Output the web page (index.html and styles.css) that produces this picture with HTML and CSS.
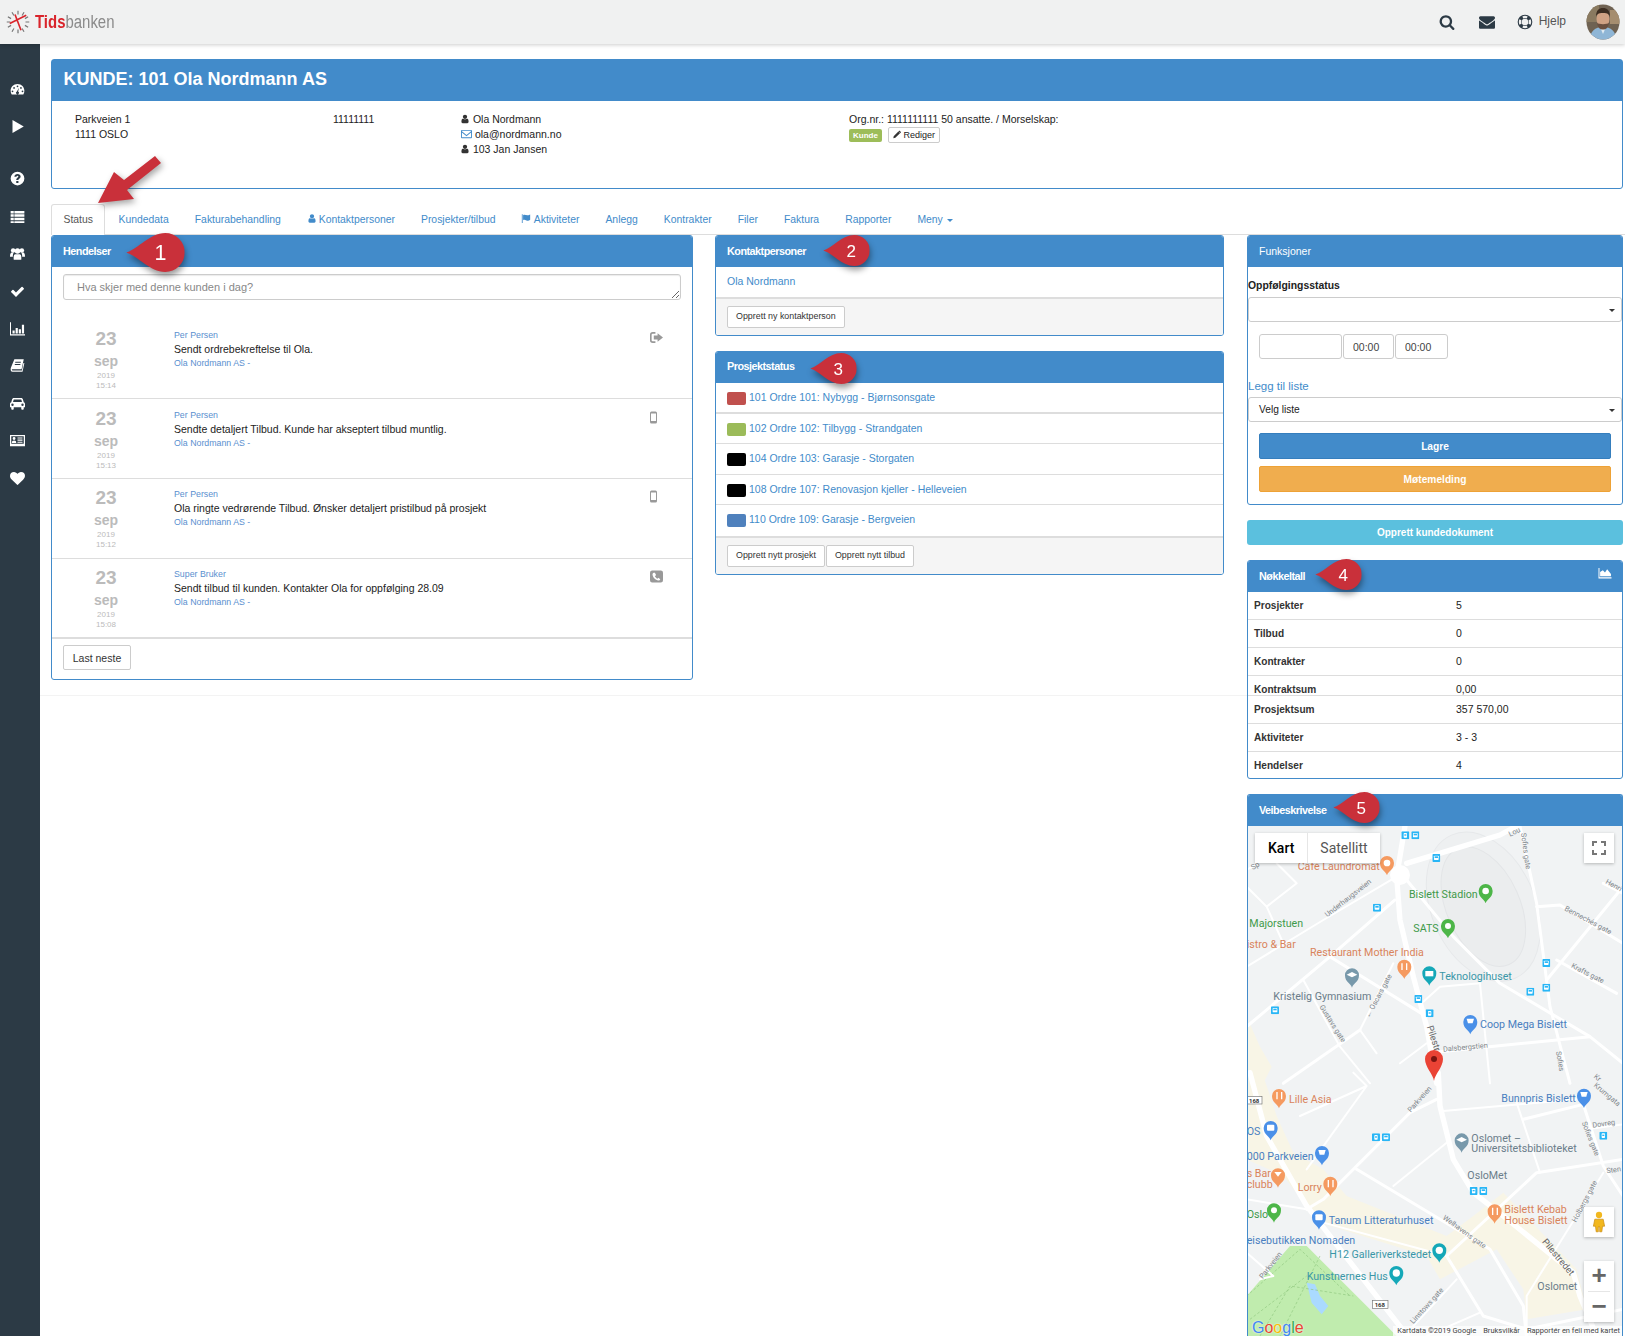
FILE: index.html
```html
<!DOCTYPE html>
<html lang="no">
<head>
<meta charset="utf-8">
<title>Tidsbanken</title>
<link rel="stylesheet" href="styles.css">
</head>
<body>
<svg class="defs" aria-hidden="true">
  <symbol id="i-user" viewBox="0 0 1792 1792"><path d="M1536 1399q0 109-62.500 187t-150.500 78h-854q-88 0-150.500-78t-62.500-187q0-85 8.500-160.500t31.500-152 58.500-131 94-89 134.500-34.500q131 128 313 128t313-128q76 0 134.500 34.500t94 89 58.500 131 31.500 152 8.500 160.500zm-256-887q0 159-112.500 271.500t-271.500 112.500-271.500-112.500-112.500-271.500 112.500-271.500 271.500-112.500 271.500 112.500 112.500 271.500z"/></symbol>
  <symbol id="i-search" viewBox="0 0 1792 1792"><path d="M1216 832q0-185-131.500-316.500t-316.500-131.500-316.500 131.500-131.500 316.500 131.500 316.500 316.500 131.500 316.500-131.500 131.500-316.500zm512 832q0 52-38 90t-90 38q-54 0-90-38l-343-342q-179 124-399 124-143 0-273.500-55.500t-225-150-150-225-55.500-273.500 55.500-273.500 150-225 225-150 273.500-55.500 273.500 55.500 225 150 150 225 55.500 273.500q0 220-124 399l343 343q37 37 37 90z"/></symbol>
  <symbol id="i-mail" viewBox="0 0 1792 1792"><path d="M1792 710v794q0 66-47 113t-113 47h-1472q-66 0-113-47t-47-113v-794q44 49 101 87 362 246 497 345 57 42 92.500 65.500t94.500 48 110 24.500h2q51 0 110-24.500t94.500-48 92.500-65.500q170-123 498-345 57-39 100-87zm0-294q0 79-49 151t-122 123q-376 261-468 325-10 7-42.500 30.500t-54 38-52 32.500-57.500 27-50 9h-2q-23 0-50-9t-57.500-27-52-32.500-54-38-42.500-30.500q-91-64-262-182.500t-205-142.500q-62-42-117-115.500t-55-136.500q0-78 41.500-130t118.500-52h1472q65 0 112.500 47t47.500 113z"/></symbol>
  <symbol id="i-heart" viewBox="0 0 1792 1792"><path d="M896 1664q-26 0-44-18l-624-602q-10-8-27.500-26t-55.500-65.500-68-97.500-53.500-121-23.500-138q0-220 127-344t351-124q62 0 126.500 21.500t120 58 95.500 68.500 76 68q36-36 76-68t95.500-68.500 120-58 126.500-21.500q224 0 351 124t127 344q0 221-229 450l-623 600q-18 18-44 18z"/></symbol>
  <symbol id="i-check" viewBox="0 0 1792 1792"><path d="M1671 566q0 40-28 68l-724 724-136 136q-28 28-68 28t-68-28l-136-136-362-362q-28-28-28-68t28-68l136-136q28-28 68-28t68 28l294 295 656-657q28-28 68-28t68 28l136 136q28 28 28 68z"/></symbol>
  <symbol id="i-gauge" viewBox="0 0 24 24"><path fill-rule="evenodd" d="M12 3C5.400 3 1 8.200 1 14c0 2.400.6 4.400 1.700 6h18.600c1.100-1.600 1.700-3.600 1.700-6 0-5.800-4.400-11-11-11zM12 5.500a1.400 1.400 0 1 1 0 2.800 1.400 1.400 0 0 1 0-2.800zM6.500 8a1.400 1.400 0 1 1 0 2.800 1.400 1.400 0 0 1 0-2.800zM4 13.500a1.400 1.400 0 1 1 0 2.800 1.400 1.400 0 0 1 0-2.800zM20 13.500a1.400 1.400 0 1 1 0 2.800 1.400 1.400 0 0 1 0-2.800zM17.500 8a1.400 1.400 0 1 1 0 2.800 1.400 1.400 0 0 1 0-2.800zM14.500 9l-1.500 6.200a2.400 2.400 0 1 1-2 0z"/></symbol>
  <symbol id="i-play" viewBox="0 0 24 24"><path d="M4 1.500 22 12 4 22.500z"/></symbol>
  <symbol id="i-help" viewBox="0 0 24 24"><path fill-rule="evenodd" d="M12 1a11 11 0 1 0 0 22 11 11 0 0 0 0-22zM10 16h3.500v3.200H10zM7 9c.2-2.800 2.200-4.200 5-4.200 2.900 0 5 1.600 5 4 0 1.800-1 2.700-2.200 3.500-.9.600-1.300 1-1.300 2.200H10c0-2 .6-2.900 1.900-3.800.8-.6 1.500-1 1.500-1.800 0-.7-.6-1.200-1.400-1.200-1 0-1.500.5-1.700 1.600z"/></symbol>
  <symbol id="i-list" viewBox="0 0 24 24"><path d="M1 3h22v4H1zM1 8.500h22v4H1zM1 14h22v4H1zM1 19.500h22v3H1z"/><path class="gap" d="M6 3h1v19H6z"/></symbol>
  <symbol id="i-group" viewBox="0 0 24 24"><circle cx="5" cy="7" r="3.600"/><circle cx="19" cy="7" r="3.600"/><circle cx="12" cy="8" r="4.400"/><path d="M0 17c0-4 1-6.500 3-6.500h3c-1 1.500-1.500 3.500-1.500 6.500H0zM24 17c0-4-1-6.500-3-6.500h-3c1 1.500 1.500 3.500 1.500 6.500H24zM6 22c-.5-5 0-9 2.500-9h7c2.500 0 3 4 2.500 9z"/></symbol>
  <symbol id="i-bars" viewBox="0 0 24 24"><path d="M0 2h1.600v19H24v2H0zM4 15h3.500v5H4zM9 11h3.500v9H9zM14 13h3.500v7H14zM19 6h3.500v14H19z"/></symbol>
  <symbol id="i-book" viewBox="0 0 24 24"><path d="M7 2h15l-3.500 16H3.500C2.600 18 2.800 20 4 20h15l2.500-12H23l-3 14H4c-3 0-3.300-3.500-2.800-6z"/><path class="gap" d="M8.500 6h9l-.3 1.500h-9zM7.800 9.500h9l-.3 1.500h-9z"/></symbol>
  <symbol id="i-car" viewBox="0 0 24 24"><path fill-rule="evenodd" d="M6 3h12c1.300 0 2.200 1 2.600 2.200L22 10c1.300.6 2 1.700 2 3v5h-2v2.500a1.500 1.500 0 0 1-1.500 1.500h-1a1.500 1.500 0 0 1-1.500-1.500V18H6v2.500A1.500 1.500 0 0 1 4.500 22h-1A1.500 1.500 0 0 1 2 20.500V18H0v-5c0-1.300.7-2.400 2-3l1.400-4.800C3.800 4 4.700 3 6 3zM6 5.500 4.800 9.700h14.400L18 5.500zM4 12a1.900 1.900 0 1 0 0 3.800A1.900 1.900 0 0 0 4 12zm16 0a1.900 1.900 0 1 0 0 3.800 1.900 1.900 0 0 0 0-3.800z"/></symbol>
  <symbol id="i-card" viewBox="0 0 24 24"><path fill-rule="evenodd" d="M0 3h24v18H0zM2 5v12h20V5zM6.500 6.500a2.300 2.300 0 1 1 0 4.600 2.300 2.300 0 0 1 0-4.600zM3 16c0-3 1-4.200 3.500-4.200S10 13 10 16zM12 7h8v1.700h-8zM12 10.500h8v1.700h-8zM12 14h8v1.700h-8z"/></symbol>
  <symbol id="i-ring" viewBox="0 0 24 24"><path fill-rule="evenodd" d="M12 1a11 11 0 1 0 0 22 11 11 0 0 0 0-22zm0 6a5 5 0 1 1 0 10 5 5 0 0 1 0-10zM8 3.700a9.200 9.200 0 0 1 8 0l-1.500 3a6 6 0 0 0-5 0zM3.700 8l3 1.500a6 6 0 0 0 0 5l-3 1.500a9.200 9.200 0 0 1 0-8zM20.300 8a9.200 9.200 0 0 1 0 8l-3-1.500a6 6 0 0 0 0-5zM9.500 17.300a6 6 0 0 0 5 0l1.500 3a9.200 9.200 0 0 1-8 0z"/></symbol>
  <symbol id="i-mailo" viewBox="0 0 24 24"><path fill-rule="evenodd" d="M2 3h20a2 2 0 0 1 2 2v14a2 2 0 0 1-2 2H2a2 2 0 0 1-2-2V5a2 2 0 0 1 2-2zm0 2v1.200l10 8 10-8V5zm0 3.800V19h20V8.800l-10 8z"/></symbol>
  <symbol id="i-flag" viewBox="0 0 24 24"><path d="M2 2h2v21H2zM5 4c4-3 8 2 13 0 2-.8 4-1.500 4-1.500V15c-3 3-6 3-9 1.500S7 14 5 16z"/></symbol>
  <symbol id="i-pencil" viewBox="0 0 24 24"><path d="M2 17 16 3l5 5L7 22l-6 1zM17.500 1.500c1-1 2.500-1 3.500 0l2 2c1 1 1 2.500 0 3.500l-1 1-5.500-5.500z"/></symbol>
  <symbol id="i-out" viewBox="0 0 24 24"><path d="M10 2v3H5a2 2 0 0 0-2 2v10a2 2 0 0 0 2 2h5v3H5a5 5 0 0 1-5-5V7a5 5 0 0 1 5-5z"/><path d="M14 4l10 8-10 8v-4.500H7v-7h7z"/></symbol>
  <symbol id="i-mobile" viewBox="0 0 14 24"><path fill-rule="evenodd" d="M3 0h8a3 3 0 0 1 3 3v18a3 3 0 0 1-3 3H3a3 3 0 0 1-3-3V3a3 3 0 0 1 3-3zM2 4v15h10V4z"/></symbol>
  <symbol id="i-phone" viewBox="0 0 24 24"><path fill-rule="evenodd" d="M4 1h16a4 4 0 0 1 4 4v14a4 4 0 0 1-4 4H4a4 4 0 0 1-4-4V5a4 4 0 0 1 4-4zm3 4c-1.500.6-2.500 2-2.300 3.800.6 5 5.500 10 10.500 10.500 1.800.2 3.200-.8 3.800-2.300l-3.500-2.500-1.800 1.500c-2-.8-4-2.800-4.800-4.800L11.400 9.500 9 5z"/></symbol>
  <symbol id="i-area" viewBox="0 0 24 24"><path d="M0 2h1.800v17H24v2H0zM3 17V9l5-3 4 4 4-6 7 9v4z"/></symbol>
  <symbol id="callout" viewBox="0 0 60 40"><path d="M0 20C13 16 24 0 40 0a20 20 0 0 1 0 40C24 40 13 24 0 20z"/></symbol>
  <symbol id="bus" viewBox="0 0 24 24"><rect width="24" height="24" rx="3" fill="#29b6f6"/><rect x="5" y="5" width="14" height="13" rx="2" fill="#fff"/><rect x="7" y="7" width="10" height="5" fill="#29b6f6"/></symbol>
  <symbol id="tram" viewBox="0 0 24 24"><rect width="24" height="24" rx="3" fill="#29b6f6"/><rect x="7" y="5" width="10" height="14" rx="2" fill="#fff"/><rect x="9" y="9" width="6" height="4" fill="#29b6f6"/></symbol>
</svg>

<header class="topbar">
  <a class="logo">
    <svg class="logo-mark" viewBox="0 0 32 32">
      <g class="logo-rays"><path d="M16 1v5M8 3l2.500 4.300M2.500 9l4.300 2.500M1 16h5M2.500 23l4.300-2.500M8 29l2.500-4.300M16 31v-5M24 29l-2.500-4.300M29.500 23l-4.300-2.500M31 16h-5M29.500 9l-4.300 2.500M24 3l-2.500 4.300"/></g>
      <path class="logo-hands" d="M27 7 5 18M12 6l8 21"/>
    </svg>
    <span class="logo-text"><b>Tids</b>banken</span>
  </a>
  <nav class="top-actions">
    <svg class="ti ti-search"><use href="#i-search"/></svg>
    <svg class="ti ti-mail"><use href="#i-mail"/></svg>
    <svg class="ti ti-ring"><use href="#i-ring"/></svg>
    <span class="help">Hjelp</span>
    <svg class="avatar" viewBox="0 0 34 36">
      <defs><clipPath id="av"><ellipse cx="17" cy="18" rx="16.500" ry="17.500"/></clipPath></defs>
      <g clip-path="url(#av)">
        <rect width="34" height="36" fill="#6f6252"/>
        <rect x="0" y="0" width="13" height="18" fill="#8a7a60"/>
        <rect x="24" y="6" width="10" height="14" fill="#a58d6f"/>
        <path d="M4 36c0-9 5-13 13-13s13 4 13 13z" fill="#8fb6d6"/>
        <path d="M14 23l3 7 3-7z" fill="#dfeaf2"/>
        <ellipse cx="17" cy="15" rx="6.500" ry="8.500" fill="#d0a284"/>
        <path d="M10 13c0-7 3-9 7-9s7 2 7 9c-1-3-2-4-7-4s-6 1-7 4z" fill="#3d2e22"/>
        <path d="M11 19c1 5 3 6.500 6 6.500s5-1.500 6-6.500c-2 1.500-10 1.500-12 0z" fill="#6b5040"/>
      </g>
    </svg>
  </nav>
</header>

<div class="shell">
  <aside class="sidebar">
    <svg class="si si-a"><use href="#i-gauge"/></svg>
    <svg class="si si-b"><use href="#i-play"/></svg>
    <svg class="si si-c"><use href="#i-help"/></svg>
    <svg class="si"><use href="#i-list"/></svg>
    <svg class="si"><use href="#i-group"/></svg>
    <svg class="si"><use href="#i-check"/></svg>
    <svg class="si"><use href="#i-bars"/></svg>
    <svg class="si"><use href="#i-book"/></svg>
    <svg class="si"><use href="#i-car"/></svg>
    <svg class="si"><use href="#i-card"/></svg>
    <svg class="si"><use href="#i-heart"/></svg>
  </aside>

  <main class="main">
    <section class="customer">
      <h1 class="customer-title">KUNDE: 101 Ola Nordmann AS</h1>
      <div class="customer-body">
        <div class="c-addr">Parkveien 1<br>1111 OSLO</div>
        <div class="c-phone">11111111</div>
        <div class="c-contact">
          <div><svg class="ci"><use href="#i-user"/></svg> Ola Nordmann</div>
          <div><svg class="ci ci-mail"><use href="#i-mailo"/></svg> ola@nordmann.no</div>
          <div><svg class="ci"><use href="#i-user"/></svg> 103 Jan Jansen</div>
        </div>
        <div class="c-org">
          <div>Org.nr.: 1111111111 50 ansatte. / Morselskap:</div>
          <div class="c-tags"><span class="tag">Kunde</span><span class="edit"><svg class="ci-pen"><use href="#i-pencil"/></svg> Rediger</span></div>
        </div>
      </div>
    </section>

    <nav class="tabs">
      <a class="tab active">Status</a>
      <a class="tab">Kundedata</a>
      <a class="tab">Fakturabehandling</a>
      <a class="tab"><svg class="tab-i tab-i-u"><use href="#i-user"/></svg> Kontaktpersoner</a>
      <a class="tab">Prosjekter/tilbud</a>
      <a class="tab"><svg class="tab-i"><use href="#i-flag"/></svg> Aktiviteter</a>
      <a class="tab">Anlegg</a>
      <a class="tab">Kontrakter</a>
      <a class="tab">Filer</a>
      <a class="tab">Faktura</a>
      <a class="tab">Rapporter</a>
      <a class="tab">Meny <i class="caret"></i></a>
    </nav>

    <div class="columns">
      <div class="col">
        <section class="panel">
          <h2 class="panel-head">Hendelser</h2>
          <div class="compose"><textarea class="compose-box" placeholder="Hva skjer med denne kunden i dag?"></textarea></div>
          <article class="event">
            <div class="date"><b class="d">23</b><b class="m">sep</b><span>2019</span><span>15:14</span></div>
            <div class="event-text"><a class="who">Per Persen</a><p>Sendt ordrebekreftelse til Ola.</p><a class="who">Ola Nordmann AS -</a></div>
            <svg class="event-i"><use href="#i-out"/></svg>
          </article>
          <article class="event">
            <div class="date"><b class="d">23</b><b class="m">sep</b><span>2019</span><span>15:13</span></div>
            <div class="event-text"><a class="who">Per Persen</a><p>Sendte detaljert Tilbud. Kunde har akseptert tilbud muntlig.</p><a class="who">Ola Nordmann AS -</a></div>
            <svg class="event-i event-m"><use href="#i-mobile"/></svg>
          </article>
          <article class="event event-up">
            <div class="date"><b class="d">23</b><b class="m">sep</b><span>2019</span><span>15:12</span></div>
            <div class="event-text"><a class="who">Per Persen</a><p>Ola ringte vedrørende Tilbud. Ønsker detaljert pristilbud på prosjekt</p><a class="who">Ola Nordmann AS -</a></div>
            <svg class="event-i event-m"><use href="#i-mobile"/></svg>
          </article>
          <article class="event event-up event-last">
            <div class="date"><b class="d">23</b><b class="m">sep</b><span>2019</span><span>15:08</span></div>
            <div class="event-text"><a class="who">Super Bruker</a><p>Sendt tilbud til kunden. Kontakter Ola for oppfølging 28.09</p><a class="who">Ola Nordmann AS -</a></div>
            <svg class="event-i"><use href="#i-phone"/></svg>
          </article>
          <div class="more"><button class="btn btn-more">Last neste</button></div>
        </section>
      </div>

      <div class="col">
        <section class="panel panel-contact">
          <h2 class="panel-head">Kontaktpersoner</h2>
          <div class="row-contact"><a>Ola Nordmann</a></div>
          <div class="panel-foot"><button class="btn btn-sm">Opprett ny kontaktperson</button></div>
        </section>
        <section class="panel panel-projects">
          <h2 class="panel-head">Prosjektstatus</h2>
          <div class="project project-first"><i class="sw sw-red"></i><a>101 Ordre 101: Nybygg - Bjørnsonsgate</a></div>
          <div class="project"><i class="sw sw-green"></i><a>102 Ordre 102: Tilbygg - Strandgaten</a></div>
          <div class="project"><i class="sw sw-black"></i><a>104 Ordre 103: Garasje - Storgaten</a></div>
          <div class="project"><i class="sw sw-black"></i><a>108 Ordre 107: Renovasjon kjeller - Helleveien</a></div>
          <div class="project project-last"><i class="sw sw-blue"></i><a>110 Ordre 109: Garasje - Bergveien</a></div>
          <div class="panel-foot panel-foot-b"><button class="btn btn-sm">Opprett nytt prosjekt</button><button class="btn btn-sm">Opprett nytt tilbud</button></div>
        </section>
      </div>

      <div class="col col-right">
        <section class="panel panel-func">
          <h2 class="panel-head panel-head-plain">Funksjoner</h2>
          <label class="f-label">Oppfølgingsstatus</label>
          <div class="select"></div>
          <div class="time-row">
            <input class="inp inp-date" type="text"><input class="inp inp-t1" type="text" value="00:00"><input class="inp inp-t2" type="text" value="00:00">
          </div>
          <a class="f-link">Legg til liste</a>
          <div class="select">Velg liste</div>
          <div class="f-buttons">
            <button class="wide wide-blue">Lagre</button>
            <button class="wide wide-orange">Møtemelding</button>
          </div>
        </section>
        <button class="doc-btn">Opprett kundedokument</button>
        <section class="panel panel-keys">
          <h2 class="panel-head panel-head-i">Nøkkeltall <svg class="head-i"><use href="#i-area"/></svg></h2>
          <div class="kv"><b>Prosjekter</b><span>5</span></div>
          <div class="kv"><b>Tilbud</b><span>0</span></div>
          <div class="kv"><b>Kontrakter</b><span>0</span></div>
          <div class="kv kv-cut"><b>Kontraktsum</b><span>0,00</span></div>
          <div class="kv"><b>Prosjektsum</b><span>357 570,00</span></div>
          <div class="kv"><b>Aktiviteter</b><span>3 - 3</span></div>
          <div class="kv kv-last"><b>Hendelser</b><span>4</span></div>
        </section>
        <section class="panel panel-map">
          <h2 class="panel-head">Veibeskrivelse</h2>
          <div class="map">
            <svg class="map-svg" viewBox="1247 826 376 510">
              <rect x="1247" y="826" width="376" height="510" fill="#f1f3f4"/>
              <g transform="translate(1240 820) scale(.3333)">
                <path class="beige" d="M20 590 60 680 95 740 70 790 20 790z"/>
                <ellipse class="stadium-o" cx="730" cy="260" rx="155" ry="235" transform="rotate(-24 730 260)"/>
                <ellipse class="stadium" cx="730" cy="260" rx="110" ry="190" transform="rotate(-24 730 260)"/>
                <g class="r r14">
                  <path d="M500 130 780 45 830 18"/>
                  <path d="M495 18 470 170 480 300 520 470 560 620 590 790"/>
                </g>
                <circle cx="480" cy="165" r="30" fill="#fff"/>
                <g class="r r9">
                  <path d="M500 180 640 350 780 490 1050 650 1149 730"/>
                  <path d="M840 18 890 250 930 560 990 790"/>
                  <path d="M890 260 960 255 1149 370"/>
                  <path d="M1149 200 920 480"/>
                  <path d="M950 420 1130 520"/>
                  <path d="M1090 190 1149 220"/>
                  <path d="M465 240 270 410 20 620"/>
                  <path d="M270 410 560 590"/>
                  <path d="M360 630 130 790"/>
                  <path d="M600 695 1050 650"/>
                </g>
                <g class="r r6">
                  <path d="M470 170 250 300 20 440"/>
                  <path d="M190 480 300 680 390 790"/>
                  <path d="M20 200 80 260 170 190 110 130"/>
                  <path d="M80 260 130 370"/>
                  <path d="M360 630 410 700"/>
                  <path d="M360 630 460 430"/>
                  <path d="M480 730 560 670"/>
                  <path d="M550 545 600 500 720 490"/>
                  <path d="M720 490 750 790"/>
                  <path d="M20 150 70 120"/>
                </g>
                <text class="mt mt-o" x="173" y="151">Café Laundromat</text>
                <path class="pin-o" d="M441 166c-4-14-21-16-21-37a21 21 0 1 1 42 0c0 21-17 23-21 37z"/><circle cx="441" cy="129" r="10" fill="#fff"/>
                <text class="mt mt-g" x="507" y="233">Bislett Stadion</text>
                <path class="pin-g" d="M737 250c-4-14-21-16-21-37a21 21 0 1 1 42 0c0 21-17 23-21 37z"/><circle cx="737" cy="213" r="10" fill="#fff"/>
                <text class="mt mt-g" x="520" y="337">SATS</text>
                <path class="pin-g" d="M624 355c-4-14-21-16-21-37a21 21 0 1 1 42 0c0 21-17 23-21 37z"/><circle cx="624" cy="318" r="9" fill="#fff"/>
                <text class="mt mt-g" x="28" y="322">Majorstuen</text>
                <text class="mt mt-o" x="20" y="385">istro &amp; Bar</text>
                <text class="mt mt-o" x="210" y="407">Restaurant Mother India</text>
                <path class="pin-o" d="M493 477c-4-14-21-16-21-37a21 21 0 1 1 42 0c0 21-17 23-21 37z"/><path d="M486 430v20M500 430v20" stroke="#fff" stroke-width="4"/>
                <path class="pin-s" d="M336 503c-4-14-21-16-21-37a21 21 0 1 1 42 0c0 21-17 23-21 37z"/><path d="M320 464l16-8 16 8-16 8z" fill="#fff"/>
                <text class="mt mt-s" x="100" y="540">Kristelig Gymnasium</text>
                <path class="pin-t" d="M568 497c-4-14-21-16-21-37a21 21 0 1 1 42 0c0 21-17 23-21 37z"/><rect x="556" y="453" width="24" height="16" fill="#fff"/>
                <text class="mt mt-t" x="598" y="479">Teknologihuset</text>
                <path class="pin-b" d="M691 643c-4-14-21-16-21-37a21 21 0 1 1 42 0c0 21-17 23-21 37z"/><path d="M680 596h22l-4 14h-14z" fill="#fff"/>
                <text class="mt mt-b" x="720" y="625">Coop Mega Bislett</text>
                <text class="ms" transform="translate(38 150) rotate(-30)">Sp</text>
                <text class="ms" transform="translate(262 292) rotate(-38)">Underhaugsveien</text>
                <text class="ms" transform="translate(843 40) rotate(82)">Sofies gate</text>
                <text class="ms" transform="translate(972 270) rotate(28)">Bennechés gate</text>
                <text class="ms" transform="translate(992 442) rotate(27)">Krafts gate</text>
                <text class="ms" transform="translate(1095 190) rotate(28)">Henri</text>
                <text class="ms" transform="translate(388 595) rotate(-62)">← Oscars gate</text>
                <text class="ms" transform="translate(238 560) rotate(58)">Gustavs gate</text>
                <text class="ms ms-l" transform="translate(560 620) rotate(72)">Pilestr</text>
                <text class="ms" transform="translate(610 695) rotate(-5)">Dalsbergstien</text>
                <text class="ms" transform="translate(948 695) rotate(80)">Sofies</text>
                <text class="ms" transform="translate(1060 772) rotate(40)">Kr</text>
                <text class="ms" transform="translate(810 50) rotate(-25)">Lou</text>
                <use href="#tram" x="484" y="34" width="24" height="24"/><use href="#bus" x="514" y="34" width="24" height="24"/>
                <use href="#bus" x="577" y="102" width="24" height="24"/><use href="#bus" x="399" y="251" width="24" height="24"/>
                <use href="#bus" x="907" y="417" width="24" height="24"/><use href="#bus" x="907" y="491" width="24" height="24"/>
                <use href="#bus" x="859" y="503" width="24" height="24"/><use href="#bus" x="523" y="525" width="24" height="24"/>
                <use href="#tram" x="557" y="568" width="24" height="24"/><use href="#bus" x="93" y="559" width="24" height="24"/>
              </g>
              <g transform="translate(1240 1076) scale(.3333)">
                <path class="beige" d="M20 0 70 0 110 120 160 230 250 280 320 360 620 480 700 420 790 350 1010 580 1040 700 860 730 850 640 770 520 600 610 560 540 240 440 130 300 20 250z"/>
                <path class="park" d="M20 660 150 510 200 510 470 780 20 780z"/>
                <path class="lake" d="M200 620 225 625 240 660 265 690 245 715 215 680z"/>
                <path class="parkline" d="M20 660 180 520 330 660M60 780 150 630 340 660M30 730 200 600M240 540 120 780"/>
                <g class="r r14">
                  <path d="M595 -10 600 90 640 250 700 350 790 420 1000 590 1020 660 1070 780"/>
                  <path d="M30 -10 80 180 200 390 510 790"/>
                </g>
                <g class="r r9">
                  <path d="M590 70 510 110 360 260 250 370 200 400"/>
                  <path d="M350 280 750 520 850 690 860 790"/>
                  <path d="M1149 250 890 290 620 540 730 720 860 760 1149 700"/>
                  <path d="M850 130 1030 85 1090 270 1149 360"/>
                </g>
                <g class="r r6">
                  <path d="M460 330 620 200"/>
                  <path d="M830 80 900 290"/>
                  <path d="M610 105 1010 70"/>
                  <path d="M1090 290 860 660 860 790"/>
                  <path d="M1040 160 1149 145"/>
                  <path d="M380 30 340 -10M380 30 200 280M180 120 380 30"/>
                  <path d="M20 530 100 600 60 610"/>
                  <path d="M520 750 650 610"/>
                  <path d="M200 400 20 370"/>
                  <path d="M250 440 620 540"/>
                  <path d="M560 780 720 710"/>
                </g>
                <text class="mt mt-o" x="147" y="80">Lille Asia</text>
                <path class="pin-o" d="M117 97c-4-14-21-16-21-37a21 21 0 1 1 42 0c0 21-17 23-21 37z"/><path d="M111 48v22M125 48v22" stroke="#fff" stroke-width="4"/>
                <text class="mt mt-b" x="784" y="78">Bunnpris Bislett</text>
                <path class="pin-b" d="M1032 96c-4-14-21-16-21-37a21 21 0 1 1 42 0c0 21-17 23-21 37z"/><path d="M1021 48h22l-4 14h-14z" fill="#fff"/>
                <text class="mt mt-b" x="20" y="177">OS</text>
                <path class="pin-b" d="M92 193c-4-14-21-16-21-37a21 21 0 1 1 42 0c0 21-17 23-21 37z"/><rect x="81" y="146" width="22" height="18" rx="3" fill="#fff"/>
                <text class="mt mt-s" x="694" y="197">Oslomet –</text>
                <text class="mt mt-s" x="694" y="229">Universitetsbiblioteket</text>
                <path class="pin-s" d="M665 230c-4-14-21-16-21-37a21 21 0 1 1 42 0c0 21-17 23-21 37z"/><path d="M649 191l16-8 16 8-16 8z" fill="#fff"/>
                <text class="mt mt-b" x="20" y="251">000 Parkveien</text>
                <path class="pin-b" d="M246 268c-4-14-21-16-21-37a21 21 0 1 1 42 0c0 21-17 23-21 37z"/><path d="M235 222h22l-4 14h-14z" fill="#fff"/>
                <text class="mt mt-s" x="682" y="308">OsloMet</text>
                <text class="mt mt-o" x="20" y="303">s Bar</text>
                <text class="mt mt-o" x="20" y="335">clubb</text>
                <path class="pin-o" d="M114 335c-4-14-21-16-21-37a21 21 0 1 1 42 0c0 21-17 23-21 37z"/><path d="M103 288h22l-11 14z" fill="#fff"/>
                <text class="mt mt-o" x="173" y="344">Lorry</text>
                <path class="pin-o" d="M271 360c-4-14-21-16-21-37a21 21 0 1 1 42 0c0 21-17 23-21 37z"/><path d="M265 312v22M279 312v22" stroke="#fff" stroke-width="4"/>
                <text class="mt mt-o" x="793" y="411">Bislett Kebab</text>
                <text class="mt mt-o" x="793" y="443">House Bislett</text>
                <path class="pin-o" d="M764 443c-4-14-21-16-21-37a21 21 0 1 1 42 0c0 21-17 23-21 37z"/><path d="M758 395v22M772 395v22" stroke="#fff" stroke-width="4"/>
                <text class="mt mt-g" x="20" y="425">Oslo</text>
                <path class="pin-g" d="M102 440c-4-14-21-16-21-37a21 21 0 1 1 42 0c0 21-17 23-21 37z"/><circle cx="102" cy="403" r="9" fill="#fff"/>
                <text class="mt mt-b" x="266" y="445">Tanum Litteraturhuset</text>
                <path class="pin-b" d="M237 461c-4-14-21-16-21-37a21 21 0 1 1 42 0c0 21-17 23-21 37z"/><rect x="226" y="415" width="22" height="18" rx="3" fill="#fff"/>
                <text class="mt mt-b" x="20" y="505">eisebutikken Nomaden</text>
                <text class="mt mt-t" x="268" y="545">H12 Galleriverkstedet</text>
                <path class="pin-t" d="M598 560c-4-14-21-16-21-37a21 21 0 1 1 42 0c0 21-17 23-21 37z"/><circle cx="598" cy="523" r="11" fill="#fff"/>
                <text class="mt mt-t" x="200" y="612">Kunstnernes Hus</text>
                <path class="pin-t" d="M469 628c-4-14-21-16-21-37a21 21 0 1 1 42 0c0 21-17 23-21 37z"/><circle cx="469" cy="591" r="11" fill="#fff"/>
                <text class="mt mt-s" x="892" y="641">Oslomet</text>
                <text class="ms" transform="translate(512 110) rotate(-48)">Parkveien</text>
                <text class="ms" transform="translate(1025 140) rotate(68)">Sofies gate</text>
                <text class="ms" transform="translate(1058 155) rotate(-8)">Dovreg</text>
                <text class="ms" transform="translate(1100 292) rotate(-8)">Sten</text>
                <text class="ms" transform="translate(1008 440) rotate(-62)">Holbergs gate</text>
                <text class="ms ms-l" transform="translate(905 498) rotate(50)">Pilestredet</text>
                <text class="ms" transform="translate(607 428) rotate(36)">Welhavens gate</text>
                <text class="ms" transform="translate(68 610) rotate(-52)">Parkveien</text>
                <text class="ms" transform="translate(520 745) rotate(-48)">Linstows gate</text>
                <text class="ms" transform="translate(1060 30) rotate(40)">Krumgata</text>
                <rect x="22" y="62" width="44" height="22" fill="#fff" stroke="#777" stroke-width="2"/><text class="road-no" x="27" y="80">168</text>
                <rect x="398" y="674" width="46" height="24" fill="#fff" stroke="#777" stroke-width="2"/><text class="road-no" x="404" y="693">168</text>
                <use href="#tram" x="396" y="172" width="24" height="24"/><use href="#bus" x="426" y="172" width="24" height="24"/>
                <use href="#tram" x="689" y="333" width="24" height="24"/><use href="#bus" x="718" y="333" width="24" height="24"/>
                <use href="#tram" x="1078" y="167" width="24" height="24"/>
              </g>
              <path class="marker" d="M1434 1081c-1-7-9-14-9-22a9 9 0 1 1 18 0c0 8-8 15-9 22z"/><circle cx="1434" cy="1059" r="3" fill="#7a1410"/>
            </svg>
            <div class="map-type"><span class="mt-on">Kart</span><span>Satellitt</span></div>
            <div class="map-btn map-full"><i></i></div>
            <div class="map-btn map-peg">
              <svg viewBox="0 0 20 30"><circle cx="10" cy="5" r="4.500" fill="#f2b81f"/><path d="M4 11h12l2 10h-3l-1 8h-3v-7H9v7H6l-1-8H2z" fill="#f2b81f" stroke="#c98a10"/></svg>
            </div>
            <div class="map-btn map-zoom"><span class="z">+</span><i class="z-sep"></i><span class="z">−</span></div>
            <div class="g-logo"><span class="g-b">G</span><span class="g-r">o</span><span class="g-y">o</span><span class="g-b">g</span><span class="g-g">l</span><span class="g-r">e</span></div>
            <div class="map-attr"><span>Kartdata ©2019 Google</span><span>Bruksvilkår</span><span>Rapportér en feil med kartet</span></div>
          </div>
        </section>
      </div>
    </div>
  </main>
</div>

<svg class="arrow" viewBox="0 0 63 47"><path d="M57 0 63 7 29 34 36 43 0 47 16 16 26 24z"/></svg>
<svg class="callout c1" viewBox="0 0 60 40"><use href="#callout" width="60" height="40"/><text x="35" y="28">1</text></svg>
<svg class="callout c2" viewBox="0 0 60 40"><use href="#callout" width="60" height="40"/><text x="36" y="28">2</text></svg>
<svg class="callout c3" viewBox="0 0 60 40"><use href="#callout" width="60" height="40"/><text x="36" y="28">3</text></svg>
<svg class="callout c4" viewBox="0 0 60 40"><use href="#callout" width="60" height="40"/><text x="36" y="28">4</text></svg>
<svg class="callout c5" viewBox="0 0 60 40"><use href="#callout" width="60" height="40"/><text x="36" y="28">5</text></svg>
</body>
</html>
```
FILE: styles.css
```css
* { box-sizing: border-box; }
html, body { margin: 0; padding: 0; }
body {
  position: relative;
  width: 1625px;
  height: 1336px;
  overflow: hidden;
  background: #fff;
  color: #222;
  font: 10.5px/15px "Liberation Sans", Arial, sans-serif;
}
a { color: #428bca; text-decoration: none; }
p, h1, h2 { margin: 0; }
button { font-family: inherit; cursor: pointer; }
.defs { position: absolute; width: 0; height: 0; }
.gap { fill: #2c3a45; }

/* top bar */
.topbar {
  position: relative;
  z-index: 2;
  display: flex;
  align-items: center;
  justify-content: space-between;
  height: 44px;
  padding: 0 5px 0 6px;
  background: #f0f1f1;
  box-shadow: 0 1px 4px rgba(0,0,0,.2);
}
.logo { display: flex; align-items: center; gap: 5px; }
.logo-mark { width: 24px; height: 24px; }
.logo-rays { stroke: #777; stroke-width: 1.6; fill: none; }
.logo-hands { stroke: #d9252c; stroke-width: 2.2; fill: none; }
.logo-text {
  display: inline-block;
  font: 18px/20px "Liberation Sans", sans-serif;
  color: #8b8b8b;
  transform: scaleX(.83);
  transform-origin: 0 50%;
}
.logo-text b { font-weight: 700; color: #d9252c; }
.top-actions { display: flex; align-items: center; }
.ti { fill: #2c3a45; height: 16px; width: 16px; }
.ti-search { margin-right: 24px; }
.ti-mail { margin-right: 22px; }
.ti-ring { margin-right: 6px; }
.help { color: #555; font-size: 12px; margin-right: 20px; margin-top: -2px; }
.avatar { width: 34px; height: 36px; }

/* layout */
.shell { display: flex; height: 1292px; }
.sidebar {
  flex: 0 0 40px;
  display: flex;
  flex-direction: column;
  align-items: center;
  padding: 38px 5px 0 0;
  background: #2c3a45;
}
.si { width: 15px; height: 15px; fill: #fff; margin-bottom: 22.4px; flex: none; }
.si-b { margin-bottom: 37px; }
.main { flex: 1; padding: 15px 2px 0 11px; }

/* customer */
.customer { border: 1px solid #428bca; border-radius: 3px; height: 130px; }
.customer-title {
  height: 41px;
  padding-left: 11.5px;
  background: #428bca;
  color: #fff;
  font-size: 18px;
  line-height: 38px;
}
.customer-body { display: flex; padding: 11px 0 0 23px; }
.c-addr { width: 258px; }
.c-phone { width: 128px; }
.c-contact { width: 388px; }
.ci { width: 10px; height: 12px; fill: #333; vertical-align: -2px; margin-left: -1px; }
.ci-mail { width: 11px; fill: #428bca; margin-left: 0; }
.c-tags { display: flex; align-items: center; gap: 6px; }
.tag {
  padding: 0 4px;
  height: 13px;
  border-radius: 2px;
  background: #9dbd59;
  color: #fff;
  font-size: 8px;
  font-weight: 700;
  line-height: 13px;
}
.edit {
  height: 16px;
  padding: 0 4px;
  border: 1px solid #ccc;
  border-radius: 2px;
  font-size: 9px;
  line-height: 14px;
}
.ci-pen { width: 8px; height: 9px; fill: #333; vertical-align: -1px; }

/* tabs */
.tabs {
  display: flex;
  height: 31px;
  margin-top: 15px;
  margin-right: -2px;
  border-bottom: 1px solid #ddd;
}
.tab {
  height: 31px;
  padding: 0 12px;
  font-size: 10.4px;
  line-height: 29px;
  white-space: nowrap;
  border: 1px solid transparent;
  border-bottom: 0;
}
.tab.active {
  color: #555;
  background: #fff;
  border-color: #ddd;
  border-radius: 3px 3px 0 0;
  padding: 0 11.5px 0 11.5px;
}
.tab-i { width: 10px; height: 11px; fill: #428bca; vertical-align: -1px; }
.tab-i-u { margin-right: -1px; }
.caret {
  display: inline-block;
  margin-left: 1px;
  vertical-align: 1px;
  border-top: 3px solid #428bca;
  border-left: 3px solid transparent;
  border-right: 3px solid transparent;
}

/* columns */
.columns {
  display: grid;
  grid-template-columns: 642px 509px 376px;
  column-gap: 22px;
  align-items: start;
  position: relative;
}
.columns::after {
  content: "";
  position: absolute;
  z-index: -1;
  left: -11px;
  top: 460px;
  width: 1207px;
  height: 1px;
  background: #f3f3f3;
}
.col { display: flex; flex-direction: column; }
.col-right { margin: 0 -1px 0 1px; }
.panel { border: 1px solid #428bca; border-radius: 3px; background: #fff; overflow: hidden; }
.panel-head {
  height: 32px;
  margin: -1px -1px 0;
  padding-left: 12px;
  background: #428bca;
  color: #fff;
  font-size: 10.8px;
  font-weight: 700;
  letter-spacing: -.5px;
  line-height: 33px;
}
.panel-head-plain { font-size: 10.5px; font-weight: 400; letter-spacing: 0; }
.panel-projects .panel-head { line-height: 31px; }

/* events */
.compose { padding: 7px 11px 19px; }
.compose-box {
  display: block;
  width: 100%;
  height: 26px;
  padding: 5px 13px;
  border: 1px solid #ccc;
  border-radius: 3px;
  font: 11px/14px "Liberation Sans", sans-serif;
  resize: vertical;
  outline: 0;
  box-shadow: inset 0 1px 1px rgba(0,0,0,.08);
}
.compose-box::placeholder { color: #888; opacity: 1; }
.event {
  position: relative;
  display: flex;
  height: 80px;
  padding-top: 8px;
  border-bottom: 1px solid #ddd;
}
.event-up { padding-top: 7px; }
.event-up .event-i { top: 11px; }
.event-last { border-bottom: 2px solid #ddd; }
.date {
  width: 122px;
  display: flex;
  flex-direction: column;
  align-items: center;
  padding-right: 14px;
  color: #bbb;
  font-size: 8px;
  line-height: 10px;
}
.date .d { font-size: 19px; line-height: 23px; }
.date .m { font-size: 14px; line-height: 22px; margin-bottom: -1px; }
.event-text { padding-top: 2px; }
.event-text p { font-size: 10.5px; line-height: 15px; margin: 1px 0 0; color: #222; }
.who { display: block; font-size: 8.8px; line-height: 12px; color: #5a8fcf; }
.event-i { position: absolute; right: 29px; top: 12px; width: 13px; height: 13px; fill: #999; }
.event-m { width: 7px; right: 35px; }
.more { padding: 6px 11px 0; height: 40px; }
.btn {
  background: #fff;
  border: 1px solid #ccc;
  border-radius: 2px;
  color: #333;
  padding: 0;
}
.btn-more { width: 68px; height: 25px; font-size: 10.5px; }
.btn-sm { height: 22px; padding: 0 8px 2px; font-size: 8.9px; }

/* contact + project panels */
.panel-contact { height: 101px; }
.row-contact { height: 30px; padding: 7px 11px 0; }
.panel-foot {
  background: #f5f5f5;
  border-top: 2px solid #ddd;
  padding: 7px 11px;
  height: 39px;
}
.panel-foot-b { display: flex; gap: 1px; height: 38px; }
.panel-projects { margin-top: 15px; height: 224px; }
.project {
  display: flex;
  align-items: flex-start;
  height: 30.6px;
  padding: 8px 11px 0;
  border-bottom: 1px solid #ddd;
  line-height: 12px;
}
.project-first { border-bottom-width: 2px; }
.project-last { border-bottom: 0; }
.sw { width: 19px; height: 13px; border-radius: 2px; margin: 1px 3px 0 0; flex: none; }
.sw-red { background: #c0504d; }
.sw-green { background: #9bbb59; }
.sw-black { background: #000; }
.sw-blue { background: #4f81bd; }

/* functions */
.panel-func { height: 270px; }
.f-label { display: block; font-size: 10.4px; font-weight: 700; line-height: 14px; margin: 12px 0 4px; color: #222; }
.select {
  position: relative;
  height: 25px;
  padding-left: 10px;
  border: 1px solid #ccc;
  border-radius: 3px;
  font-size: 10.2px;
  line-height: 24px;
}
.select::after {
  content: "";
  position: absolute;
  right: 6px;
  top: 11px;
  border-top: 3px solid #333;
  border-left: 3px solid transparent;
  border-right: 3px solid transparent;
}
.time-row { display: flex; padding: 12px 0 0 11px; }
.inp { height: 25px; border: 1px solid #ccc; border-radius: 3px; padding: 0 9px; font: 10.5px "Liberation Sans", sans-serif; color: #444; margin-right: 1px; outline: 0; }
.inp-date { width: 83px; }
.inp-t1 { width: 51px; }
.inp-t2 { width: 53px; }
.f-link { display: block; margin: 20px 0 4px; font-size: 11.5px; line-height: 14px; }
.f-buttons { display: flex; flex-direction: column; gap: 7px; padding: 11px 11px 0; }
.wide { height: 26px; border: 0; border-radius: 2px; color: #fff; font-size: 10.2px; font-weight: 700; }
.wide-blue { background: #428bca; border: 1px solid #357ebd; }
.wide-orange { background: #f0ad4e; border: 1px solid #eea236; }
.doc-btn {
  height: 25px;
  margin-top: 15px;
  padding-bottom: 2px;
  border: 0;
  border-radius: 3px;
  background: #5bc0de;
  color: #fff;
  font-size: 10px;
  font-weight: 700;
}
.panel-keys { margin-top: 15px; height: 219px; }
.panel-head-i { position: relative; }
.head-i { position: absolute; right: 11px; top: 7px; width: 14px; height: 13px; fill: #fff; }
.kv {
  display: grid;
  grid-template-columns: 202px 1fr;
  height: 28px;
  padding: 6px 0 0 6px;
  border-bottom: 1px solid #ddd;
  line-height: 15px;
}
.kv b { color: #333; font-size: 10.1px; }
.kv-cut { height: 20px; }
.kv-last { border-bottom: 0; height: 27px; }

/* map */
.panel-map { margin-top: 15px; height: 600px; border-bottom: 0; }
.map { position: relative; height: 510px; margin: 0 -1px; }
.map-svg { display: block; width: 376px; height: 510px; }
.r { fill: none; stroke: #fff; stroke-linecap: round; stroke-linejoin: round; }
.r14 { stroke-width: 16; }
.r9 { stroke-width: 9; }
.r6 { stroke-width: 6; }
.beige { fill: #f8f5e6; }
.stadium-o { fill: #eef0f1; stroke: #e6e8ea; stroke-width: 3; }
.stadium { fill: #ebedee; stroke: #e3e5e7; stroke-width: 3; }
.park { fill: #c0ecae; }
.lake { fill: #aadaff; }
.parkline { fill: none; stroke: #8fc77f; stroke-width: 2; stroke-dasharray: 8 6; }
.mt { font: 32px "Roboto", sans-serif; }
.mt-o { fill: #d9835b; }
.mt-g { fill: #3f9a4a; }
.mt-s { fill: #6b7d8a; }
.mt-t { fill: #3a97a8; }
.mt-b { fill: #4a7fc0; }
.ms { font: 22px "Roboto", sans-serif; fill: #80868b; }
.ms-l { font-size: 28px; fill: #666; }
.road-no { font: 700 18px "Roboto", sans-serif; fill: #333; }
.pin-o { fill: #f59a60; }
.pin-g { fill: #4db648; }
.pin-s { fill: #7899ab; }
.pin-t { fill: #15a8b8; }
.pin-b { fill: #4a90e8; }
.marker { fill: #ea4335; }
.map-type {
  position: absolute;
  left: 8px;
  top: 7px;
  display: flex;
  height: 30px;
  background: #fff;
  box-shadow: 0 1px 3px rgba(0,0,0,.25);
  font: 14px/30px "Roboto", sans-serif;
  color: #565656;
}
.map-type span { padding: 0 12px; }
.map-type .mt-on { color: #000; font-weight: 500; border-right: 1px solid #e6e6e6; padding: 0 13px; }
.map-btn { position: absolute; left: 337px; width: 30px; background: #fff; box-shadow: 0 1px 3px rgba(0,0,0,.25); }
.map-full { top: 7px; height: 30px; }
.map-full i {
  position: absolute;
  left: 8px;
  top: 8px;
  width: 14px;
  height: 14px;
  background:
    linear-gradient(#777,#777) 0 0/5px 2px no-repeat,
    linear-gradient(#777,#777) 0 0/2px 5px no-repeat,
    linear-gradient(#777,#777) 100% 0/5px 2px no-repeat,
    linear-gradient(#777,#777) 100% 0/2px 5px no-repeat,
    linear-gradient(#777,#777) 0 100%/5px 2px no-repeat,
    linear-gradient(#777,#777) 0 100%/2px 5px no-repeat,
    linear-gradient(#777,#777) 100% 100%/5px 2px no-repeat,
    linear-gradient(#777,#777) 100% 100%/2px 5px no-repeat;
}
.map-peg { top: 381px; height: 30px; padding: 4px 8px; }
.map-peg svg { display: block; width: 14px; height: 22px; }
.map-zoom { top: 435px; height: 61px; display: flex; flex-direction: column; align-items: center; color: #666; }
.z { height: 30px; font: 700 26px/29px "Liberation Sans", sans-serif; }
.z-sep { width: 22px; height: 1px; background: #e6e6e6; }
.g-logo {
  position: absolute;
  left: 5px;
  bottom: 0;
  font: 400 16px/17px "Liberation Sans", sans-serif;
  text-shadow: 0 0 2px #fff;
}
.g-b { color: #4285f4; }
.g-r { color: #ea4335; }
.g-y { color: #fbbc05; }
.g-g { color: #34a853; }
.map-attr {
  position: absolute;
  right: 0;
  bottom: 0;
  display: flex;
  gap: 7px;
  padding: 0 3px 0 4px;
  height: 10px;
  background: rgba(255,255,255,.7);
  font: 7.5px/10px "Roboto", sans-serif;
  color: #444;
  white-space: nowrap;
}

/* annotations */
.arrow {
  position: absolute;
  left: 98px;
  top: 156px;
  width: 63px;
  height: 47px;
  fill: #c9303a;
  overflow: visible;
  filter: drop-shadow(2px 3px 3px rgba(0,0,0,.35));
}
.callout {
  position: absolute;
  width: 47px;
  height: 31px;
  fill: #c9303a;
  overflow: visible;
  filter: drop-shadow(1px 4px 3px rgba(0,0,0,.4));
}
.callout text { font: 22px "Liberation Sans", sans-serif; fill: #fff; text-anchor: middle; }
.c1 { left: 126px; top: 233px; width: 59px; height: 39px; }
.c2 { left: 823px; top: 235px; }
.c3 { left: 810px; top: 353px; }
.c4 { left: 1315px; top: 559px; }
.c5 { left: 1333px; top: 792px; }
```
